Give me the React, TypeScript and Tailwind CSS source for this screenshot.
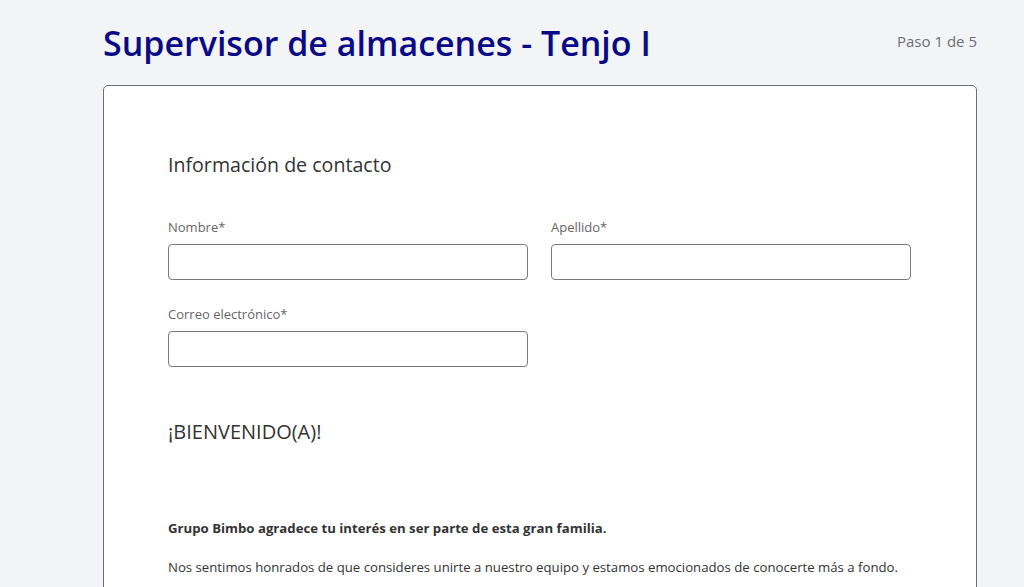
import React from "react"

const font = { fontFamily: '"Segoe UI", "Open Sans", "Noto Sans", sans-serif' }

function Field({ label }: { label: string }) {
  return (
    <div className="flex flex-col">
      <label className="text-[13px] leading-[18px] text-[#666666]">{label}</label>
      <input
        type="text"
        className="mt-[8px] h-[36px] w-[360px] rounded-[4px] border border-[#7a7a7a] bg-white px-2 outline-none"
      />
    </div>
  )
}

export default function App() {
  return (
    <div className="min-h-screen bg-[#f3f4f6]" style={font}>
      <div className="ml-[103px] w-[874px]">
        <div className="flex items-start justify-between pt-[19px]">
          <h1 className="text-[34px] font-semibold leading-[48px] text-[#0a0a86]">
            Supervisor de almacenes - Tenjo I
          </h1>
          <span className="mt-[12px] text-[15px] leading-[20px] text-[#6b6f76]">Paso 1 de 5</span>
        </div>

        <div className="mt-[18px] rounded-[5px] border border-[#6e6e6e] bg-white px-[64px] pt-[66px] pb-[40px]">
          <h2 className="text-[19.6px] leading-[26px] text-[#333333]">Información de contacto</h2>

          <div className="mt-[40px] grid grid-cols-[360px_360px] gap-x-[23px] gap-y-[25px]">
            <Field label="Nombre*" />
            <Field label="Apellido*" />
            <Field label="Correo electrónico*" />
          </div>

          <h2 className="mt-[52px] text-[20px] leading-[26px] text-[#333333]">¡BIENVENIDO(A)!</h2>

          <p className="mt-[74px] text-[13.2px] font-bold leading-[18px] text-[#333333]">
            Grupo Bimbo agradece tu interés en ser parte de esta gran familia.
          </p>
          <p className="mt-[21px] text-[13.2px] leading-[18px] text-[#333333]">
            Nos sentimos honrados de que consideres unirte a nuestro equipo y estamos emocionados de conocerte más a fondo.
          </p>
        </div>
      </div>
    </div>
  )
}
